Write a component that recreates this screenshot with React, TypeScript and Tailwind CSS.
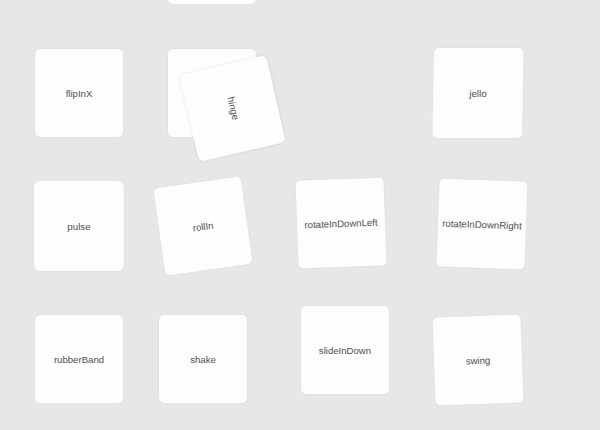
import React from "react";

type Cell = { name?: string; blank?: boolean; cls?: string; hinge?: boolean };

const rows: Cell[][] = [
  [{}, { blank: true }, {}, {}],
  [
    { name: "flipInX" },
    { name: "hinge", hinge: true },
    {},
    { name: "jello", cls: "[transform:skewX(-1deg)_scale(1.02)]" },
  ],
  [
    { name: "pulse", cls: "scale-[1.02]" },
    { name: "rollIn", cls: "[transform:translate(-9px,0px)_rotate(-8deg)]" },
    { name: "rotateInDownLeft", cls: "[transform:translate(-4px,-3px)_rotate(-2deg)]" },
    { name: "rotateInDownRight", cls: "[transform:translate(4px,-2px)_rotate(2deg)]" },
  ],
  [
    { name: "rubberBand" },
    { name: "shake", cls: "[transform:translate(-9px,0px)]" },
    { name: "slideInDown", cls: "[transform:translate(0px,-9px)]" },
    { name: "swing", cls: "[transform:translate(0px,1px)_rotate(-2deg)]" },
  ],
];

function Card({ name, cls }: { name: string; cls?: string }) {
  return (
    <div
      className={
        "w-[88px] h-[88px] rounded-[5px] bg-[#fdfdfd] shadow-[0_0_2px_rgba(0,0,0,0.08)] flex items-center justify-center pt-[2px] text-[9.6px] text-[#505050] " +
        (cls ?? "")
      }
    >
      {name}
    </div>
  );
}

export default function App() {
  return (
    <div
      className="w-[600px] h-[430px] overflow-hidden bg-[#e8e7e8]"
      style={{ fontFamily: '"Liberation Sans", Arial, sans-serif' }}
    >
      <div className="grid grid-cols-[repeat(4,88px)] gap-x-[45px] gap-y-[45px] pl-[35px] mt-[-84px]">
        {rows.flat().map((c, i) => (
          <div key={i} className="relative w-[88px] h-[88px]">
            {c.blank && (
              <div className="w-[88px] h-[88px] rounded-[5px] bg-[#fdfdfd] shadow-[0_0_2px_rgba(0,0,0,0.08)]" />
            )}
            {c.name && !c.hinge && <Card name={c.name} cls={c.cls} />}
            {c.hinge && (
              <>
                <div className="w-[88px] h-[88px] rounded-[5px] bg-[#fdfdfd] shadow-[0_0_2px_rgba(0,0,0,0.08)]" />
                <div className="absolute left-0 top-0 w-[89px] h-[89px] rounded-[5px] bg-[#fdfdfd] shadow-[0_0_3px_rgba(0,0,0,0.12)] flex items-center justify-center text-[9.6px] text-[#505050] [transform:translate(20px,15px)_rotate(77deg)]">
                  hinge
                </div>
              </>
            )}
          </div>
        ))}
      </div>
    </div>
  );
}
